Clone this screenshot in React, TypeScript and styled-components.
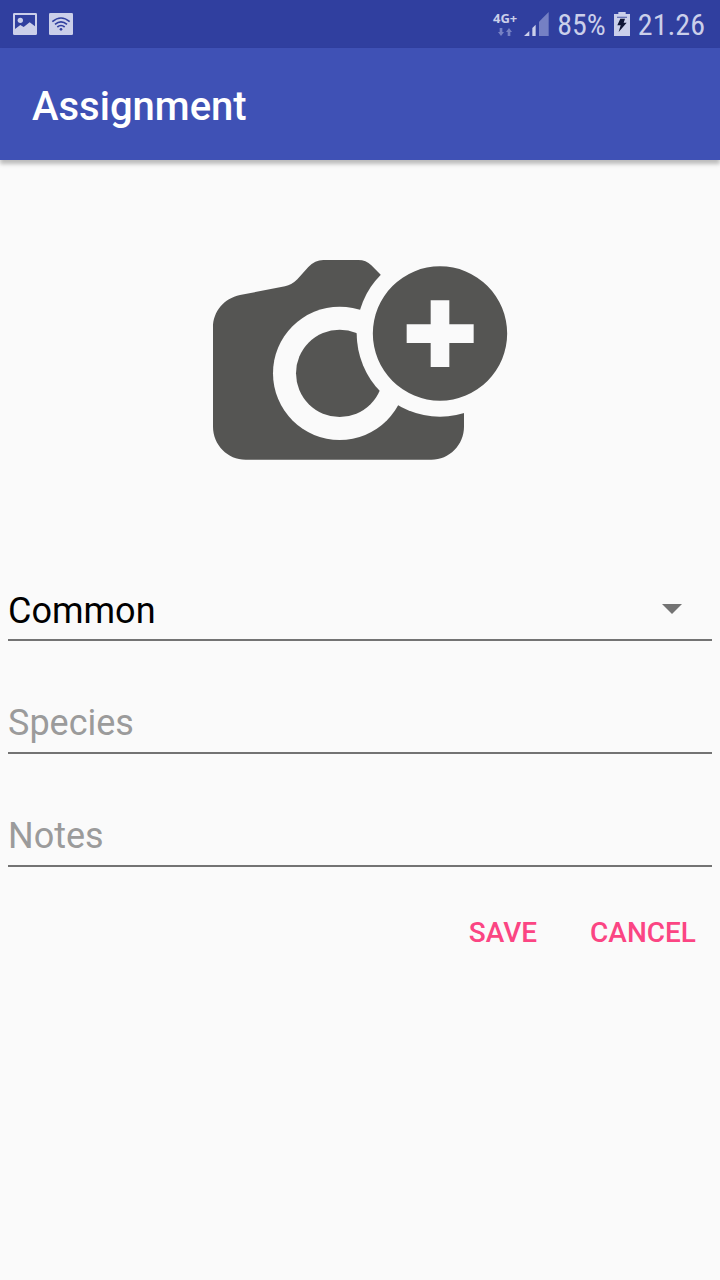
import React from "react";
import styled, { createGlobalStyle } from "styled-components";

const GlobalStyle = createGlobalStyle`
  * { box-sizing: border-box; }
  body {
    margin: 0;
    background: #fafafa;
    font-family: Roboto, "Liberation Sans", sans-serif;
  }
`;

const Screen = styled.div`
  display: flex;
  flex-direction: column;
  min-height: 100vh;
`;

const StatusBar = styled.div`
  display: flex;
  align-items: center;
  justify-content: space-between;
  height: 48px;
  padding: 0 15px 0 13px;
  background: #303f9f;
  color: #cbcfea;
`;

const StatusGroup = styled.div<{ $gap: number }>`
  display: flex;
  align-items: center;
  gap: ${(p) => p.$gap}px;
`;

const Icon = styled.svg`
  display: block;
  flex: none;
`;

const StatusText = styled.span`
  padding-top: 2px;
  font-family: "Roboto Condensed", Roboto, sans-serif;
  font-size: 30px;
  line-height: 46px;
`;

const Network = styled.div`
  display: flex;
  flex-direction: column;
  align-items: center;
  gap: 3px;
  font-family: "Open Sans", "Noto Sans", sans-serif;
  font-size: 13px;
  font-weight: 700;
  line-height: 13px;
`;

const AppBar = styled.header`
  display: flex;
  align-items: center;
  height: 112px;
  padding: 6px 32px 0;
  background: #3f51b5;
  box-shadow: 0 4px 4px rgba(0, 0, 0, 0.25);
`;

const Title = styled.h1`
  margin: 0;
  color: #fff;
  font-size: 40px;
  font-weight: 500;
  line-height: 48px;
`;

const Form = styled.form`
  display: flex;
  flex-direction: column;
  padding: 90px 8px 0;
`;

const PhotoButton = styled.button`
  align-self: center;
  margin: 0 0 119px;
  padding: 0;
  border: 0;
  background: none;
`;

const Fields = styled.div`
  display: grid;
  gap: 61px;
`;

const Field = styled.label`
  display: grid;
  align-items: center;
  height: 52px;
  border-bottom: 2px solid #737373;

  > * {
    grid-area: 1 / 1;
  }
`;

const Select = styled.select`
  width: 100%;
  height: 50px;
  padding: 0 0 6px;
  border: 0;
  outline: 0;
  appearance: none;
  background: none;
  color: #000;
  font-family: inherit;
  font-size: 36px;
`;

const Arrow = styled.svg`
  justify-self: end;
  margin: 0 30px 10px 0;
  pointer-events: none;
`;

const Input = styled.input`
  width: 100%;
  height: 50px;
  padding: 0 0 8px;
  border: 0;
  outline: 0;
  background: none;
  color: #000;
  font-family: inherit;
  font-size: 36px;

  &::placeholder {
    color: #9b9b9b;
    opacity: 1;
  }
`;

const Actions = styled.div`
  display: flex;
  justify-content: flex-end;
  gap: 21px;
  margin-top: 29px;
`;

const TextButton = styled.button`
  height: 72px;
  padding: 0 16px;
  border: 0;
  background: none;
  color: #fb4583;
  font-family: inherit;
  font-size: 28px;
  font-weight: 500;
  text-transform: uppercase;
`;

const PictureIcon = () => (
  <Icon width="24" height="22" viewBox="0 0 72 66" fill="currentColor" aria-hidden="true">
    <path
      fillRule="evenodd"
      d="M4 0H68Q72 0 72 4V62Q72 66 68 66H4Q0 66 0 62V4Q0 0 4 0ZM6 6V48L22 36L32 42L50 28L66 40V6Z"
    />
    <circle cx="22" cy="22" r="8" />
  </Icon>
);

const WifiIcon = () => (
  <Icon width="24" height="22" viewBox="0 0 72 66" aria-hidden="true">
    <rect width="72" height="66" rx="4" fill="currentColor" />
    <g fill="none" stroke="#303f9f" strokeWidth="5">
      <path d="M10 26Q36 4 62 26" />
      <path d="M18 34Q36 19 54 34" />
      <path d="M25 42Q36 33 47 42" />
    </g>
    <circle cx="36" cy="49" r="4" fill="#303f9f" />
  </Icon>
);

const DataArrows = () => (
  <Icon width="14" height="8" viewBox="0 0 42 24" fill="#7681c4" aria-hidden="true">
    <path d="M5 0H13V12H18L9 24L0 12H5Z" />
    <path d="M29 24H37V12H42L33 0L24 12H29Z" />
  </Icon>
);

const SignalIcon = () => (
  <Icon width="25" height="24" viewBox="0 0 75 72" fill="currentColor" aria-hidden="true">
    <path d="M0 72L16 57V72Z" />
    <path d="M25 72V48L35 38V72Z" />
    <path d="M45 72V29L74 0V72Z" fill="#7580c4" />
  </Icon>
);

const BatteryIcon = () => (
  <Icon width="16" height="24" viewBox="0 0 48 72" fill="currentColor" aria-hidden="true">
    <path d="M13 0H35V6H48V72H0V6H13Z" />
    <path d="M9 14H39V18H9Z" fill="#6670b4" />
    <path d="M19 20H33L29 32H38L14 60L20 40H10Z" fill="#101536" />
  </Icon>
);

const CameraIcon = () => (
  <Icon width="320" height="220" viewBox="0 0 960 660" fill="#555553" aria-hidden="true">
    <mask id="camera-cutouts" maskUnits="userSpaceOnUse" x="0" y="0" width="960" height="660">
      <rect width="960" height="660" fill="#fff" />
      <circle cx="419" cy="370" r="200" fill="#000" />
      <circle cx="419" cy="370" r="131" fill="#fff" />
      <circle cx="720" cy="250" r="250" fill="#000" />
    </mask>
    <path
      mask="url(#camera-cutouts)"
      d="M39 232C39 185 72 145 120 135L255 109Q275 105 292 88L325 51Q345 30 370 30H475Q498 30 514 46L543 75H792V530C792 584 748 629 694 629H137C83 629 39 584 39 530Z"
    />
    <path
      fillRule="evenodd"
      d="M720 49A201 201 0 0 1 720 452A201 201 0 0 1 720 49ZM692 151V223H620V279H692V351H748V279H821V223H748V151Z"
    />
  </Icon>
);

export default function App() {
  return (
    <Screen>
      <GlobalStyle />
      <StatusBar>
        <StatusGroup $gap={12}>
          <PictureIcon />
          <WifiIcon />
        </StatusGroup>
        <StatusGroup $gap={8}>
          <StatusGroup $gap={7}>
            <Network>
              4G+
              <DataArrows />
            </Network>
            <SignalIcon />
          </StatusGroup>
          <StatusText>85%</StatusText>
          <BatteryIcon />
          <StatusText>21.26</StatusText>
        </StatusGroup>
      </StatusBar>
      <AppBar>
        <Title>Assignment</Title>
      </AppBar>
      <Form onSubmit={(e) => e.preventDefault()}>
        <PhotoButton type="button" aria-label="Add photo">
          <CameraIcon />
        </PhotoButton>
        <Fields>
          <Field>
            <Select aria-label="Name" defaultValue="Common">
              <option>Common</option>
            </Select>
            <Arrow width="20" height="10" viewBox="0 0 20 10" fill="#737373" aria-hidden="true">
              <path d="M0 0H20L10 10Z" />
            </Arrow>
          </Field>
          <Field>
            <Input aria-label="Species" placeholder="Species" />
          </Field>
          <Field>
            <Input aria-label="Notes" placeholder="Notes" />
          </Field>
        </Fields>
        <Actions>
          <TextButton type="submit">Save</TextButton>
          <TextButton type="button">Cancel</TextButton>
        </Actions>
      </Form>
    </Screen>
  );
}
